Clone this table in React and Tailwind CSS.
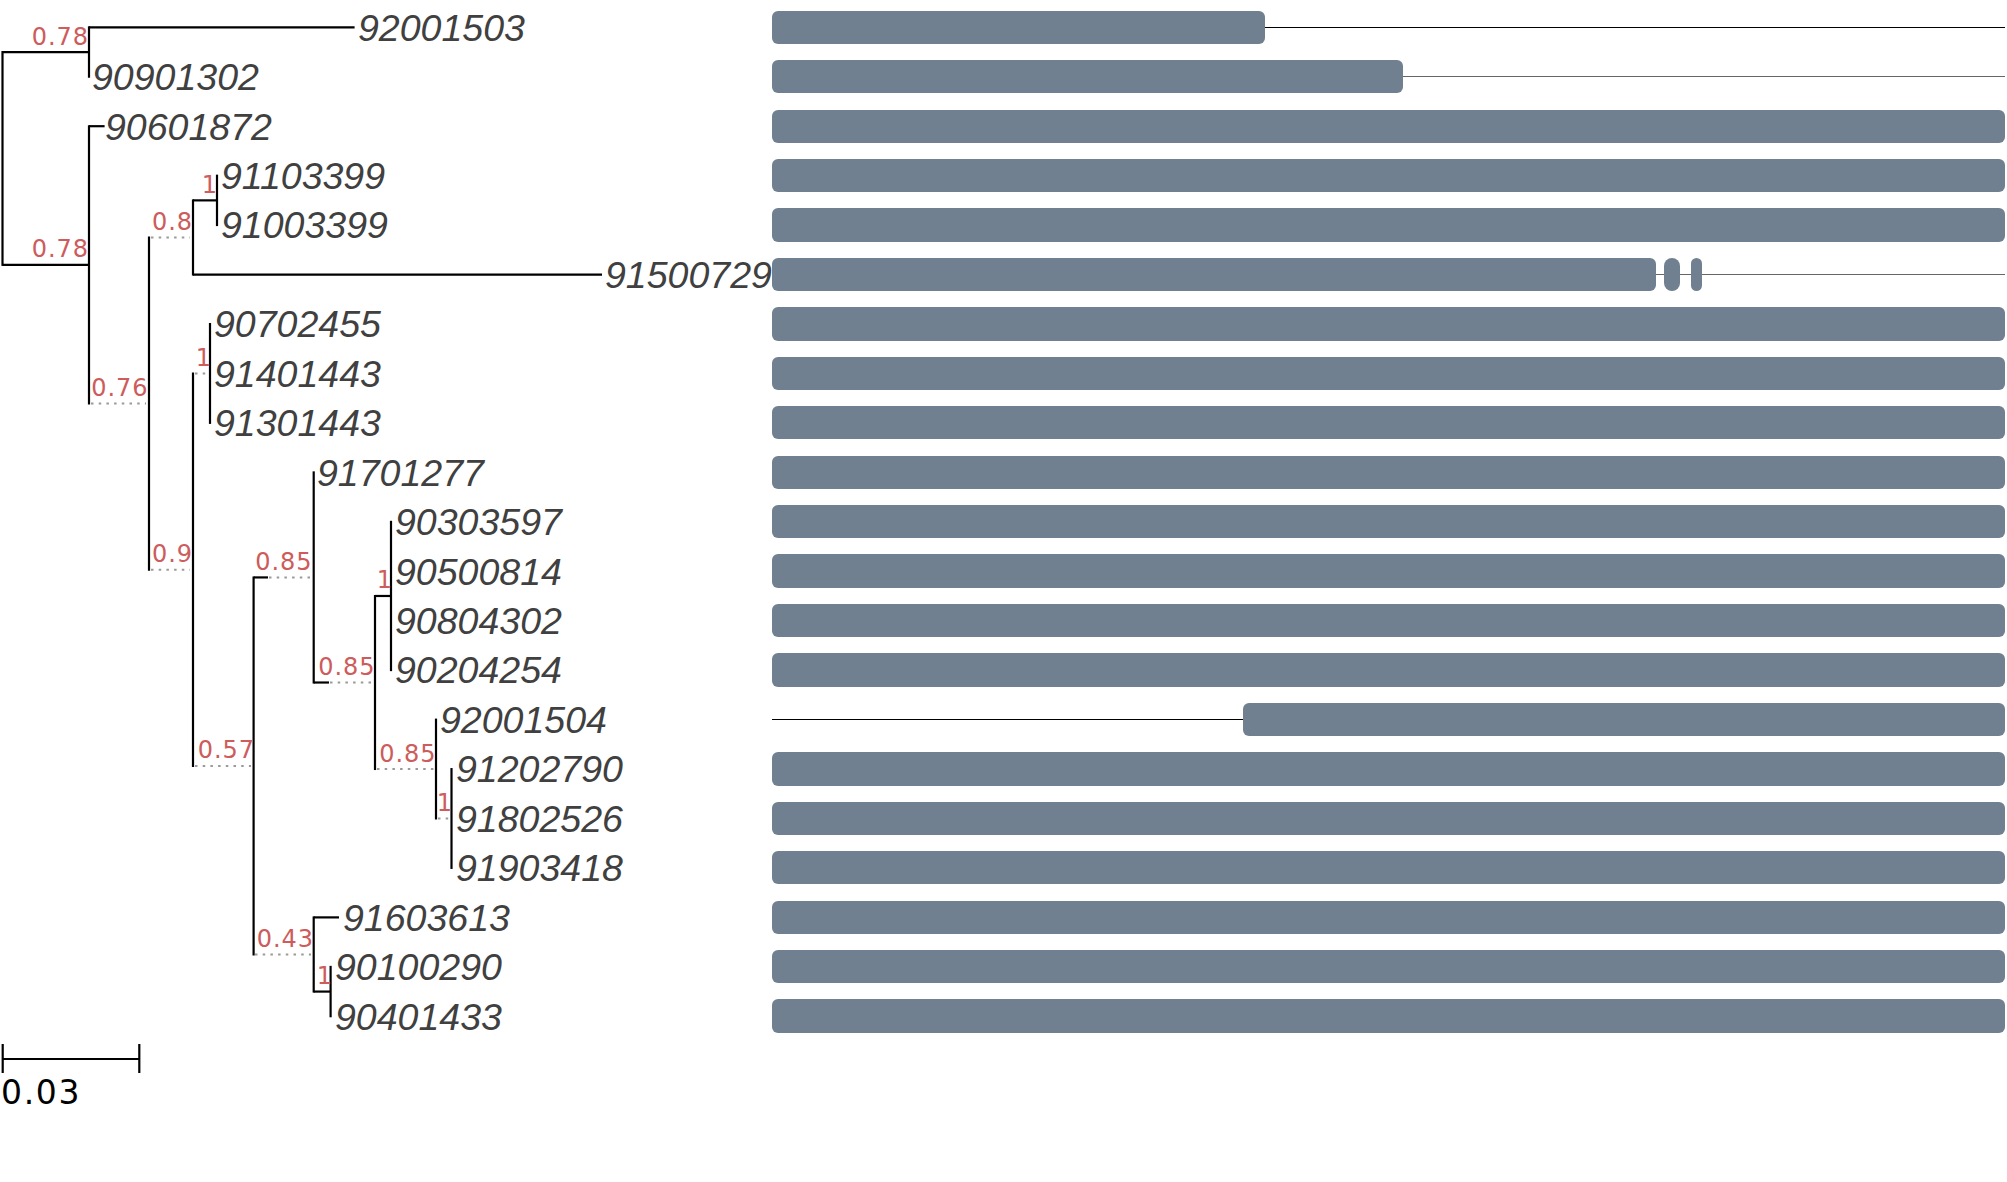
import React from 'react';

const ROW = 49.45;
const TOP = 27.3;
const ry = (i) => TOP + ROW * i;
const mid = (a, b) => (a + b) / 2;

// leaf name, label x
const leaves = [
    ['92001503', 358], ['90901302', 92], ['90601872', 105], ['91103399', 221],
    ['91003399', 221], ['91500729', 605], ['90702455', 214], ['91401443', 214],
    ['91301443', 214], ['91701277', 317], ['90303597', 395], ['90500814', 395],
    ['90804302', 395], ['90204254', 395], ['92001504', 440], ['91202790', 456],
    ['91802526', 456], ['91903418', 456], ['91603613', 343], ['90100290', 335],
    ['90401433', 335],
];

// internal node positions
const yA = mid(ry(0), ry(1));
const yE = mid(ry(3), ry(4));
const yD = mid(yE, ry(5));
const yI = ry(7);
const yN = mid(ry(10), ry(13));
const yP = ry(16);
const yO = mid(ry(14), yP);
const yM = mid(yN, yO);
const yK = mid(ry(9), yM);
const yQ = mid(ry(19), ry(20));
const yL = mid(ry(18), yQ);
const yJ = mid(yK, yL);
const yH = mid(yI, yJ);
const yC = mid(yD, yH);
const yB = mid(ry(2), yC);

const verticals = [
    [2.5, yA, yB], [89, ry(0), ry(1)], [89, ry(2), yC], [149, yD, yH],
    [193, yE, ry(5)], [217, ry(3), ry(4)], [193, yI, yJ], [210, ry(6), ry(8)],
    [253.6, yK, yL], [313.7, ry(9), yM], [375, yN, yO], [391, ry(10), ry(13)],
    [436, ry(14), yP], [451.5, ry(15), ry(17)], [313.7, ry(18), yQ], [330.6, ry(19), ry(20)],
];

const solid = [
    [2.5, 89, yA], [2.5, 89, yB], [89, 354.6, ry(0)], [89, 104.6, ry(2)],
    [193, 217, yE], [193, 602, ry(5)], [253.6, 268, yK], [313.7, 329, yM],
    [375, 391, yN], [313.7, 339, ry(18)], [313.7, 330.6, yQ],
];

const dotted = [
    [91, 146, yC], [151, 190, yD], [151, 190, yH], [195, 208, yI],
    [195, 251, yJ], [269, 311, yK], [330, 373, yM], [255, 311, yL],
    [377, 434, yO], [438, 449, yP],
];

const supports = [
    ['0.78', 89, yA], ['0.78', 89, yB], ['0.76', 148.5, yC], ['0.8', 193, yD],
    ['1', 218, yE], ['1', 212, yI], ['0.9', 193, yH], ['0.57', 255, yJ],
    ['0.85', 312.5, yK], ['0.85', 375.5, yM], ['1', 393, yN], ['0.85', 436.5, yO],
    ['1', 453, yP], ['0.43', 314, yL], ['1', 333, yQ],
];

const Bar = ({ className = 'flex-1' }) => (
    <div className={`${className} h-[33.3px] rounded-[6px] bg-[#708090]`} />
);

const Line = ({ className = 'flex-1', color = 'bg-[#666]' }) => (
    <div className={`${className} h-px ${color}`} />
);

function Track({ index }) {
    if (index === 0) {
        return (<><Bar className="w-[493px] shrink-0" /><Line color="bg-[#000]" /></>);
    }
    if (index === 1) {
        return (<><Bar className="w-[631px] shrink-0" /><Line /></>);
    }
    if (index === 5) {
        return (
            <>
                <Bar className="w-[884px] shrink-0" />
                <Line className="w-[8px] shrink-0" />
                <div className="w-[16px] h-[33.3px] shrink-0 rounded-full bg-[#708090]" />
                <Line className="w-[11px] shrink-0" />
                <div className="w-[11px] h-[33.3px] shrink-0 rounded-full bg-[#708090]" />
                <Line />
            </>
        );
    }
    if (index === 14) {
        return (<><Line className="w-[471px] shrink-0" color="bg-[#000]" /><Bar /></>);
    }
    return <Bar />;
}

function Tree() {
    return (
        <svg width="772" height="1182" className="shrink-0 overflow-visible">
            {verticals.map(([x, y1, y2], i) => (
                <line key={`v${i}`} x1={x} x2={x} y1={y1 - 1} y2={y2 + 1} stroke="#000" strokeWidth="2.2" />
            ))}
            {solid.map(([x1, x2, y], i) => (
                <line key={`s${i}`} x1={x1} x2={x2} y1={y} y2={y} stroke="#000" strokeWidth="2.2" />
            ))}
            {dotted.map(([x1, x2, y], i) => (
                <line key={`d${i}`} x1={x1} x2={x2} y1={y} y2={y} stroke="#9a9a9a" strokeWidth="2" strokeDasharray="2.5 5.2" />
            ))}
            {supports.map(([t, x, y], i) => (
                <text key={`t${i}`} x={x} y={y - 7.5} textAnchor="end"
                    className="font-['DejaVu_Sans',sans-serif] text-[24px] tracking-[0.04em] fill-[#cd5c5c]">
                    {t}
                </text>
            ))}
            {leaves.map(([name, x], i) => (
                <text key={name} x={x} y={ry(i) + 13.3}
                    className="font-['Liberation_Sans',Arial,sans-serif] italic text-[37.5px] fill-[#404040]">
                    {name}
                </text>
            ))}
            <line x1="2.7" x2="139.3" y1="1059" y2="1059" stroke="#000" strokeWidth="2.2" />
            <line x1="2.7" x2="2.7" y1="1044" y2="1073" stroke="#000" strokeWidth="2.2" />
            <line x1="139.3" x2="139.3" y1="1044" y2="1073" stroke="#000" strokeWidth="2.2" />
            <text x="1" y="1104" className="font-['DejaVu_Sans',sans-serif] text-[33px] tracking-[0.05em] fill-black">
                0.03
            </text>
        </svg>
    );
}

export default function App() {
    return (
        <div className="flex w-full h-[1182px] bg-white overflow-hidden">
            <Tree />
            <div className="flex-1 flex flex-col pt-[2.6px] pr-[2px]">
                {leaves.map(([name], i) => (
                    <div key={name} className="h-[49.45px] flex items-center">
                        <Track index={i} />
                    </div>
                ))}
            </div>
        </div>
    );
}
